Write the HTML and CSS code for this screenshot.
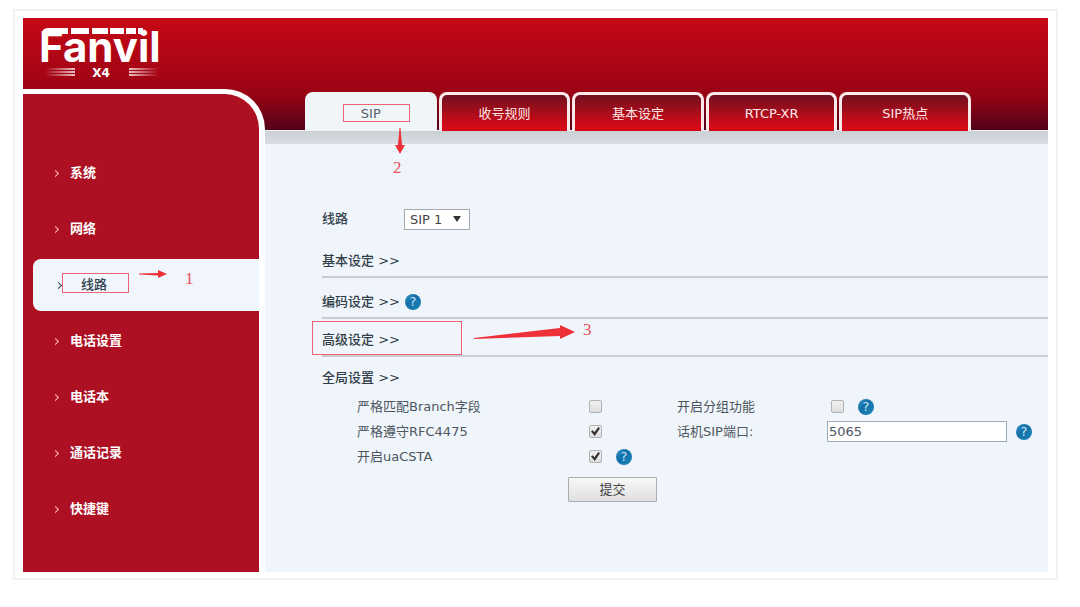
FILE: index.html
```html
<!DOCTYPE html>
<html lang="zh-CN">
<head>
<meta charset="utf-8">
<title>Fanvil X4</title>
<link rel="stylesheet" href="styles.css">
</head>
<body>
<div class="frame">
  <div class="app">
    <aside class="side">
      <div class="brand">
        <svg class="logo" width="150" height="71" viewBox="0 0 150 71" role="img" aria-label="Fanvil X4">
          <defs>
            <linearGradient id="fadeL"><stop offset="0" stop-color="#fff" stop-opacity="0"/><stop offset="1" stop-color="#fff" stop-opacity=".75"/></linearGradient>
            <linearGradient id="fadeR"><stop offset="0" stop-color="#fff" stop-opacity=".75"/><stop offset="1" stop-color="#fff" stop-opacity="0"/></linearGradient>
          </defs>
          <text class="logo-name" x="16" y="44">Fanvil</text>
          <g fill="#fff">
            <path d="M19 22v-6q0-6 6-6h20v6H27z"/>
            <rect x="48" y="10" width="18" height="6"/><rect x="69" y="10" width="16" height="6"/><rect x="87" y="10" width="14" height="6"/><rect x="103" y="10" width="10" height="6"/><rect x="115" y="10" width="5" height="6"/>
          </g>
          <g fill="url(#fadeL)"><rect x="22" y="50" width="30" height="2"/><rect x="22" y="53" width="30" height="2"/><rect x="22" y="56" width="30" height="2"/></g>
          <g fill="url(#fadeR)"><rect x="106" y="50" width="30" height="2"/><rect x="106" y="53" width="30" height="2"/><rect x="106" y="56" width="30" height="2"/></g>
          <text class="logo-model" x="78" y="59" text-anchor="middle">X4</text>
        </svg>
      </div>
      <nav class="menu">
        <a href="#">系统</a>
        <a href="#">网络</a>
        <a href="#" class="current">线路
          <span class="mark mark-line"></span>
          <svg class="arrow-line" width="28" height="10" viewBox="0 0 28 10"><path d="M0 4.500 19 4V1l9 4-9 4V6.500L0 5.500z"/></svg>
          <span class="step step-one">1</span>
        </a>
        <a href="#">电话设置</a>
        <a href="#">电话本</a>
        <a href="#">通话记录</a>
        <a href="#">快捷键</a>
      </nav>
    </aside>
    <div class="body">
      <nav class="tabs">
        <a href="#" class="tab active">SIP
          <span class="mark mark-tab"></span>
          <svg class="arrow-tab" width="10" height="26" viewBox="0 0 10 26"><path d="M4.500 0h1L7 17h3l-5 9-5-9h3z"/></svg>
          <span class="step step-two">2</span>
        </a>
        <a href="#" class="tab">收号规则</a>
        <a href="#" class="tab">基本设定</a>
        <a href="#" class="tab">RTCP-XR</a>
        <a href="#" class="tab">SIP热点</a>
      </nav>
      <main class="content">
        <form>
          <div class="line-row">
            <label for="line">线路</label>
            <span class="select"><select id="line"><option>SIP 1</option></select></span>
          </div>
          <h2 class="section first">基本设定 &gt;&gt;</h2>
          <h2 class="section second">编码设定 &gt;&gt; <span class="help">?</span></h2>
          <h2 class="section">高级设定 &gt;&gt;
            <span class="mark mark-advanced"></span>
            <svg class="arrow-advanced" width="101" height="16" viewBox="0 0 101 16"><path d="M0 14 86 4V1l15 7-15 7v-3L0 15z"/></svg>
            <span class="step step-three">3</span>
          </h2>
          <h2 class="section last">全局设置 &gt;&gt;</h2>
          <div class="fields">
            <label for="branch">严格匹配Branch字段</label>
            <div class="cell"><input type="checkbox" id="branch"></div>
            <label for="group">开启分组功能</label>
            <div class="cell inset"><input type="checkbox" id="group"><span class="help">?</span></div>
            <label for="rfc">严格遵守RFC4475</label>
            <div class="cell"><input type="checkbox" id="rfc" checked></div>
            <label for="port">话机SIP端口:</label>
            <div class="cell port"><input type="text" id="port" value="5065"><span class="help">?</span></div>
            <label for="csta">开启uaCSTA</label>
            <div class="cell"><input type="checkbox" id="csta" checked><span class="help">?</span></div>
          </div>
          <button type="button" class="submit">提交</button>
        </form>
      </main>
    </div>
  </div>
</div>
</body>
</html>
```
FILE: styles.css
```css
* { box-sizing: border-box; }
body {
  margin: 0;
  padding: 9px 22px 20px 13px;
  background: #fff;
  font: 13px/20px "DejaVu Sans", "Noto Sans CJK SC", sans-serif;
  color: #4d5660;
}
a { color: inherit; text-decoration: none; }
.frame {
  padding: 7px 8px 6px 8px;
  border: 2px solid #f0f1f2;
}
.app {
  display: flex;
  background: #eff5fb linear-gradient(#c60816 0, #a80515 45%, #980414 68%, #53021a 100%) no-repeat 0 0 / 100% 112px;
}

/* sidebar */
.side {
  flex: 0 0 242px;
  display: flex;
  flex-direction: column;
}
.brand { height: 71px; }
.logo { display: block; }
.logo-name { font: 700 42px Inter, sans-serif; fill: #fff; }
.logo-model { font: 700 12px "DejaVu Sans", sans-serif; fill: #fff; }
.menu {
  flex: 1;
  display: flex;
  flex-direction: column;
  padding: 51px 0 35px;
  background: #ad1022;
  border: solid #fff;
  border-width: 5px 6px 0 0;
  border-top-right-radius: 40px;
  color: #fff;
  font-weight: 700;
}
.menu a {
  position: relative;
  display: flex;
  align-items: center;
  height: 56px;
  padding-left: 30px;
}
.menu a::before {
  content: "";
  width: 4px;
  height: 4px;
  margin-right: 12px;
  border: solid #ffb8b8;
  border-width: 1px 1px 0 0;
  transform: rotate(45deg);
}
.menu a.current {
  height: 52px;
  margin: 2px 0 2px 10px;
  padding-left: 23px;
  background: #f1f5fc;
  border-radius: 8px 0 0 8px;
  color: #31424e;
  font-weight: 500;
}
.menu a.current::before { margin-right: 20px; border-color: #31424e; }

/* tabs */
.body { flex: 1; min-width: 0; }
.tabs {
  display: flex;
  align-items: flex-end;
  gap: 2px;
  height: 113px;
  padding: 0 77px 0 40px;
}
.tab {
  position: relative;
  flex: 0 1 132px;
  height: 39px;
  border: solid #fbeaec;
  border-width: 3px 3px 0;
  border-radius: 8px 8px 0 0;
  background: linear-gradient(#70101f, #d20a18 85%);
  color: #ffe6e6;
  line-height: 37px;
  text-align: center;
  white-space: nowrap;
}
.tab.active {
  background: #f0f5f8;
  border-color: #f0f5f8;
  color: #56616c;
}

/* content */
.content {
  padding: 77px 0 20px 57px;
  background: linear-gradient(#cbd0d5, #d8dee3) no-repeat 0 0 / 100% 13px;
}
.line-row {
  display: flex;
  align-items: center;
  height: 22px;
  font-weight: 500;
  color: #36434e;
}
.line-row label { width: 82px; }
.select { position: relative; }
.select select {
  display: block;
  width: 66px;
  height: 21px;
  padding: 0 5px;
  appearance: none;
  border: 1px solid #a5a9ad;
  border-radius: 0;
  background: #fff;
  font: inherit;
  font-weight: 400;
  color: #444;
}
.select::after {
  content: "";
  position: absolute;
  top: 7px;
  right: 9px;
  border: solid transparent;
  border-width: 6px 4px 0;
  border-top-color: #333;
  pointer-events: none;
}
.section {
  position: relative;
  display: flex;
  align-items: center;
  gap: 5px;
  height: 28px;
  margin: 10px 0 0;
  padding: 2px 0 6px;
  border-bottom: 2px solid #c9cdd1;
  font-size: 13px;
  font-weight: 500;
  color: #303d48;
}
.section.first { margin-top: 20px; }
.section.second { margin-top: 13px; }
.section.last { height: 20px; padding: 2px 0 0; border: 0; }
.help {
  flex: none;
  width: 16px;
  height: 16px;
  border-radius: 50%;
  background: linear-gradient(135deg, #3595c5, #156fa8 40%, #1b86ba);
  color: #c4e6f6;
  font: 400 13px/16px "DejaVu Sans", sans-serif;
  text-align: center;
}
.fields {
  display: grid;
  grid-template-columns: 232px 88px 150px 1fr;
  grid-auto-rows: 25px;
  align-items: center;
  padding: 7px 0 0 35px;
}
.cell { display: flex; align-items: center; gap: 14px; }
.inset { padding-left: 4px; }
.port { gap: 9px; }
input[type="checkbox"] {
  appearance: none;
  display: grid;
  place-items: center;
  width: 13px;
  height: 13px;
  margin: 0;
  border: 1px solid #b0b3b5;
  border-radius: 2px;
  background: linear-gradient(#f0f0f0, #dedede);
}
input[type="checkbox"]:checked::before {
  content: "";
  width: 9px;
  height: 9px;
  background: #333;
  clip-path: polygon(0 50%, 20% 36%, 38% 58%, 82% 0, 100% 14%, 42% 100%);
}
input[type="text"] {
  flex: 0 1 180px;
  min-width: 0;
  height: 21px;
  padding: 0 1px;
  border: 1px solid #9facb6;
  background: #fff;
  font: inherit;
  color: #4d5660;
}
.submit {
  display: block;
  width: 89px;
  height: 25px;
  margin: 8px 0 0 246px;
  padding: 0;
  border: 1px solid #a9adb0;
  border-radius: 1px;
  background: linear-gradient(#f8f8f8, #dfdfdf);
  font: inherit;
  color: #444;
}

/* walkthrough annotations laid over the interface */
.mark { position: absolute; border: 1px solid #ea6474; }
.menu svg, .tab svg, .section svg { position: absolute; fill: #ee3039; }
.step {
  position: absolute;
  font: 400 17px/18px "Liberation Serif", serif;
  color: #e84e5b;
}
.mark-line { left: 29px; top: 14px; width: 67px; height: 20px; }
.arrow-line { left: 106px; top: 10px; }
.step-one { left: 152px; top: 11px; }
.mark-tab { left: 35px; top: 9px; width: 67px; height: 18px; }
.arrow-tab { left: 87px; top: 33px; }
.step-two { left: 85px; top: 64px; }
.mark-advanced { left: -10px; top: -8px; width: 150px; height: 34px; }
.arrow-advanced { left: 152px; top: -5px; }
.step-three { left: 261px; top: -8px; }
```
